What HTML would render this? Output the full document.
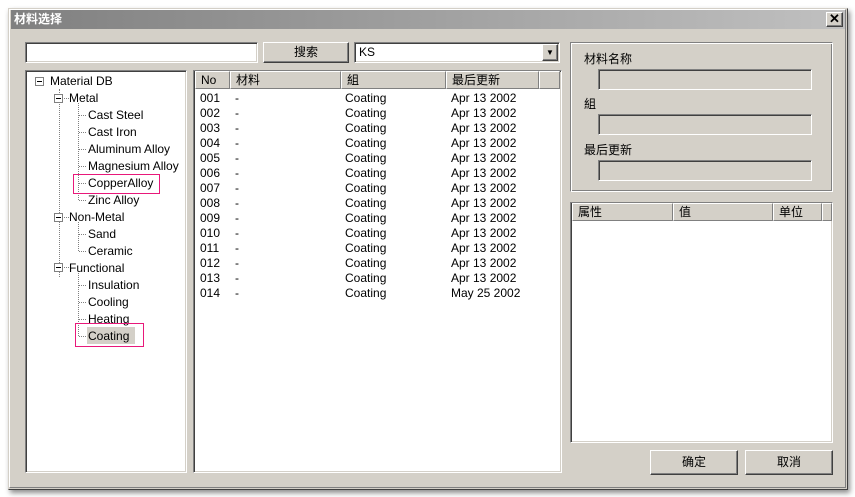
<!DOCTYPE html>
<html><head><meta charset="utf-8"><style>
*{margin:0;padding:0;box-sizing:border-box}
body{width:855px;height:497px;background:#fff;position:relative;overflow:hidden;font-family:"Liberation Sans","Noto Sans CJK SC",sans-serif;font-size:12px;color:#000}
.a{position:absolute}
.win{left:8px;top:8px;width:840px;height:482px;background:#d4d0c8;border:1px solid #d4d0c8;border-right-color:#404040;border-bottom-color:#404040;box-shadow:2px 3px 5px rgba(0,0,0,.45)}
.win2{left:9px;top:9px;width:837px;height:479px;border:1px solid #fff;border-right-color:#808080;border-bottom-color:#808080}
.title{left:11px;top:10px;width:834px;height:19px;background:linear-gradient(90deg,#808080,#c0c0c0);color:#fff;font-weight:bold;font-size:12px;line-height:19px;padding-left:3px}
.sunk{border:1px solid;border-color:#808080 #fff #fff #808080;box-shadow:inset 1px 1px 0 #404040,inset -1px -1px 0 #d4d0c8}
.btn{border:1px solid;border-color:#fff #404040 #404040 #fff;box-shadow:inset -1px -1px 0 #808080;background:#d4d0c8;text-align:center}
.hd{position:absolute;top:0;height:18px;line-height:17px;padding-left:5px;border:1px solid;border-color:#fff #808080 #808080 #fff;background:#d4d0c8}
.t{position:absolute;white-space:nowrap;line-height:15px}
.dl{position:absolute;border-left:1px dotted #808080}
.dh{position:absolute;border-top:1px dotted #808080;height:0}
.pb{position:absolute;width:9px;height:9px;border:1px solid #808080;background:#fff}
.pb:after{content:"";position:absolute;left:1px;top:3px;width:5px;height:1px;background:#000}
</style></head><body>
<div class="a win"></div><div class="a win2"></div>
<div class="a title">材料选择</div>
<div class="a btn" style="left:826px;top:12px;width:17px;height:15px;font-size:13px;line-height:12px;font-weight:bold">✕</div>

<div class="a sunk" style="left:25px;top:42px;width:233px;height:21px;background:#fff"></div>
<div class="a btn" style="left:263px;top:42px;width:86px;height:21px;line-height:19px">搜索</div>
<div class="a sunk" style="left:354px;top:42px;width:206px;height:21px;background:#fff;padding-left:4px;line-height:19px">KS</div>
<div class="a btn" style="left:542px;top:44px;width:16px;height:17px;font-size:8px;line-height:15px">▼</div>

<!-- tree -->
<div class="a sunk" style="left:25px;top:70px;width:162px;height:403px;background:#fff">
 <div class="pb" style="left:9px;top:6px"></div>
 <div class="t" style="left:24px;top:3px">Material DB</div>
 <div class="dl" style="left:33px;top:18px;height:188px"></div>
 <div class="pb" style="left:28px;top:23px"></div><div class="dh" style="left:38px;top:27px;width:5px"></div>
 <div class="t" style="left:43px;top:20px">Metal</div>
 <div class="dl" style="left:52px;top:32px;height:97px"></div>
 <div class="t" style="left:62px;top:37px">Cast Steel</div><div class="dh" style="left:53px;top:44px;width:7px"></div>
 <div class="t" style="left:62px;top:54px">Cast Iron</div><div class="dh" style="left:53px;top:61px;width:7px"></div>
 <div class="t" style="left:62px;top:71px">Aluminum Alloy</div><div class="dh" style="left:53px;top:78px;width:7px"></div>
 <div class="t" style="left:62px;top:88px">Magnesium Alloy</div><div class="dh" style="left:53px;top:95px;width:7px"></div>
 <div class="t" style="left:62px;top:105px">CopperAlloy</div><div class="dh" style="left:53px;top:112px;width:7px"></div>
 <div class="a" style="left:47px;top:103px;width:87px;height:20px;border:1px solid #e8187a"></div>
 <div class="t" style="left:62px;top:122px">Zinc Alloy</div><div class="dh" style="left:53px;top:129px;width:7px"></div>
 <div class="pb" style="left:28px;top:142px"></div><div class="dh" style="left:38px;top:146px;width:5px"></div>
 <div class="t" style="left:43px;top:139px">Non-Metal</div>
 <div class="dl" style="left:52px;top:151px;height:29px"></div>
 <div class="t" style="left:62px;top:156px">Sand</div><div class="dh" style="left:53px;top:163px;width:7px"></div>
 <div class="t" style="left:62px;top:173px">Ceramic</div><div class="dh" style="left:53px;top:180px;width:7px"></div>
 <div class="pb" style="left:28px;top:192px"></div><div class="dh" style="left:38px;top:196px;width:5px"></div>
 <div class="t" style="left:43px;top:190px">Functional</div>
 <div class="dl" style="left:52px;top:202px;height:63px"></div>
 <div class="t" style="left:62px;top:207px">Insulation</div><div class="dh" style="left:53px;top:214px;width:7px"></div>
 <div class="t" style="left:62px;top:224px">Cooling</div><div class="dh" style="left:53px;top:231px;width:7px"></div>
 <div class="t" style="left:62px;top:241px">Heating</div><div class="dh" style="left:53px;top:248px;width:7px"></div>
 <div class="a" style="left:61px;top:256px;width:48px;height:17px;background:#d4d0c8"></div>
 <div class="t" style="left:62px;top:258px">Coating</div><div class="dh" style="left:53px;top:265px;width:7px"></div>
 <div class="a" style="left:49px;top:252px;width:69px;height:24px;border:1px solid #e8187a"></div>
</div>

<!-- list -->
<div class="a sunk" style="left:193px;top:70px;width:369px;height:403px;background:#fff">
 <div class="hd" style="left:1px;width:35px">No</div>
 <div class="hd" style="left:36px;width:111px">材料</div>
 <div class="hd" style="left:147px;width:105px">組</div>
 <div class="hd" style="left:252px;width:93px">最后更新</div>
 <div class="hd" style="left:345px;width:21px"></div>
 <div class="a" style="left:6px;top:20px;line-height:15px">001<br>002<br>003<br>004<br>005<br>006<br>007<br>008<br>009<br>010<br>011<br>012<br>013<br>014</div>
 <div class="a" style="left:41px;top:20px;line-height:15px">-<br>-<br>-<br>-<br>-<br>-<br>-<br>-<br>-<br>-<br>-<br>-<br>-<br>-</div>
 <div class="a" style="left:151px;top:20px;line-height:15px">Coating<br>Coating<br>Coating<br>Coating<br>Coating<br>Coating<br>Coating<br>Coating<br>Coating<br>Coating<br>Coating<br>Coating<br>Coating<br>Coating</div>
 <div class="a" style="left:257px;top:20px;line-height:15px">Apr 13 2002<br>Apr 13 2002<br>Apr 13 2002<br>Apr 13 2002<br>Apr 13 2002<br>Apr 13 2002<br>Apr 13 2002<br>Apr 13 2002<br>Apr 13 2002<br>Apr 13 2002<br>Apr 13 2002<br>Apr 13 2002<br>Apr 13 2002<br>May 25 2002</div>
</div>

<!-- group box -->
<div class="a" style="left:570px;top:42px;width:263px;height:150px;border:1px solid;border-color:#808080 #fff #fff #808080;box-shadow:inset 1px 1px 0 #fff,inset -1px -1px 0 #808080"></div>
<div class="t" style="left:584px;top:52px">材料名称</div>
<div class="a sunk" style="left:598px;top:69px;width:214px;height:21px"></div>
<div class="t" style="left:584px;top:97px">組</div>
<div class="a sunk" style="left:598px;top:114px;width:214px;height:21px"></div>
<div class="t" style="left:584px;top:143px">最后更新</div>
<div class="a sunk" style="left:598px;top:160px;width:214px;height:21px"></div>

<div class="a sunk" style="left:570px;top:202px;width:263px;height:241px;background:#fff">
 <div class="hd" style="left:1px;width:101px">属性</div>
 <div class="hd" style="left:102px;width:100px">值</div>
 <div class="hd" style="left:202px;width:49px">单位</div>
 <div class="hd" style="left:251px;width:10px"></div>
</div>

<div class="a btn" style="left:650px;top:450px;width:88px;height:25px;line-height:23px">确定</div>
<div class="a btn" style="left:745px;top:450px;width:88px;height:25px;line-height:23px">取消</div>
</body></html>
